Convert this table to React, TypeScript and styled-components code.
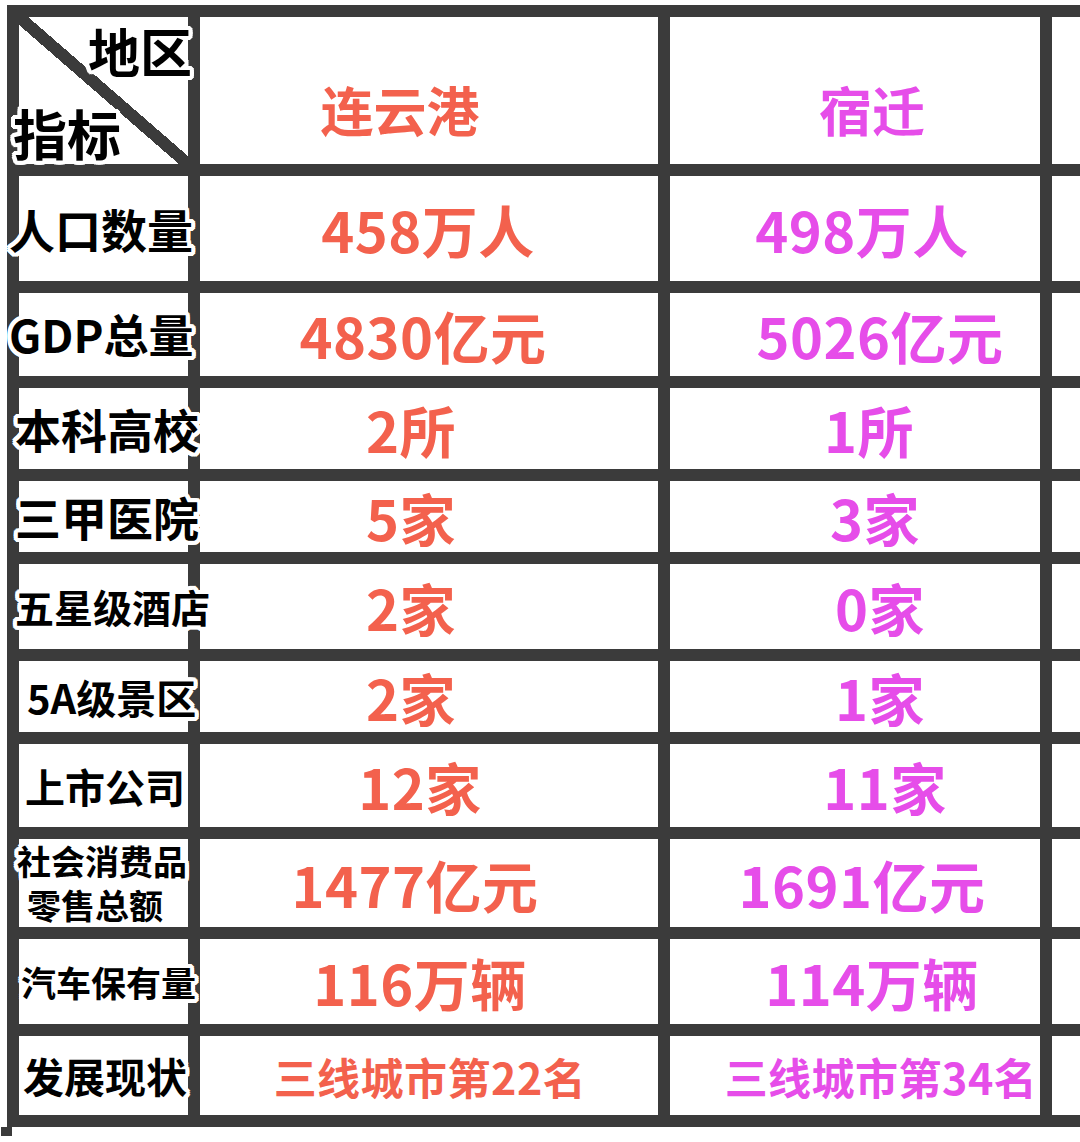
import React from "react";
import styled, { createGlobalStyle } from "styled-components";

const GlobalStyle = createGlobalStyle`
  html, body {
    margin: 0;
    padding: 0;
    background: #ffffff;
    overflow: hidden;
  }
  body {
    font-family: "Noto Sans CJK SC", "Noto Sans", sans-serif;
  }
`;

const LINE = "#3b3b3b";
const CORAL = "#f3614d";
const MAGENTA = "#e64de9";

// white halo round the black labels, like a sticker outline
const halo = [
  "4px 0 0 #fff",
  "-4px 0 0 #fff",
  "0 4px 0 #fff",
  "0 -4px 0 #fff",
  "3px 3px 0 #fff",
  "-3px 3px 0 #fff",
  "3px -3px 0 #fff",
  "-3px -3px 0 #fff",
  "2px 4px 0 #fff",
  "-2px 4px 0 #fff",
  "2px -4px 0 #fff",
  "-2px -4px 0 #fff",
  "4px 2px 0 #fff",
  "-4px 2px 0 #fff",
  "4px -2px 0 #fff",
  "-4px -2px 0 #fff",
].join(", ");

interface Row {
  label: string[];
  size: number;
  pad?: number;
  a: string;
  b: string;
  aSize?: number;
  bSize?: number;
  aShift?: number;
  bShift?: number;
}

const rows: Row[] = [
  { label: ["人口数量"], size: 46, pad: 0, a: "458万人", b: "498万人", aShift: -2, bShift: 14, aSize: 56, bSize: 56 },
  { label: ["GDP总量"], size: 45, pad: 0, a: "4830亿元", b: "5026亿元", aShift: -12, bShift: 50, aSize: 56, bSize: 56 },
  { label: ["本科高校"], size: 46, pad: 6, a: "2所", b: "1所", aShift: -36, bShift: 28, aSize: 56, bSize: 56 },
  { label: ["三甲医院"], size: 46, pad: 6, a: "5家", b: "3家", aShift: -36, bShift: 40, aSize: 56, bSize: 56 },
  { label: ["五星级酒店"], size: 39, pad: 6, a: "2家", b: "0家", aShift: -36, bShift: 50, aSize: 56, bSize: 56 },
  { label: ["5A级景区"], size: 40, pad: 18, a: "2家", b: "1家", aShift: -36, bShift: 50, aSize: 56, bSize: 56 },
  { label: ["上市公司"], size: 40, pad: 16, a: "12家", b: "11家", aShift: -18, bShift: 60, aSize: 56, bSize: 56 },
  { label: ["社会消费品", "零售总额"], size: 34, pad: 8, a: "1477亿元", b: "1691亿元", aShift: -28, bShift: 14, aSize: 56, bSize: 56 },
  { label: ["汽车保有量"], size: 35, pad: 12, a: "116万辆", b: "114万辆", aShift: -18, bShift: 34, aSize: 56, bSize: 56 },
  { label: ["发展现状"], size: 41, pad: 14, a: "三线城市第22名", b: "三线城市第34名", aSize: 43, bSize: 43, aShift: 2, bShift: 52 },
];

export default function App() {
  return (
    <>
      <GlobalStyle />
      <Page>
        <Table>
          <Corner>
            <CornerTop>地区</CornerTop>
            <CornerBottom>指标</CornerBottom>
          </Corner>
          <HeadCell $color={CORAL} $shift={-58}>
            连云港
          </HeadCell>
          <HeadCell $color={MAGENTA} $shift={34}>
            宿迁
          </HeadCell>
          <Cell />

          {rows.map((r) => (
            <React.Fragment key={r.label.join("")}>
              <LabelCell $size={r.size} $pad={r.pad ?? 0}>
                {r.label.map((t) => (
                  <span key={t}>{t}</span>
                ))}
              </LabelCell>
              <ValueCell $color={CORAL} $size={r.aSize ?? 54} $shift={r.aShift ?? 0}>
                {r.a}
              </ValueCell>
              <ValueCell $color={MAGENTA} $size={r.bSize ?? 54} $shift={r.bShift ?? 0}>
                {r.b}
              </ValueCell>
              <Cell />
            </React.Fragment>
          ))}
        </Table>
        <TailLine />
      </Page>
    </>
  );
}

const Page = styled.div`
  width: 1080px;
  height: 1142px;
  overflow: hidden;
  padding: 5px 0 0 7px;
  box-sizing: border-box;
`;

const Table = styled.div`
  display: grid;
  width: max-content;
  background: ${LINE};
  padding: 12px;
  gap: 12px;
  grid-template-columns: 169px 458px 370px 120px;
  grid-template-rows: 147px 105px 83px 81px 71px 85px 71px 83px 88px 85px 79px;
`;

// the left rule runs on a little past the bottom rule
const TailLine = styled.div`
  width: 11px;
  height: 9px;
  margin-left: -6px;
  background: ${LINE};
`;

const Cell = styled.div`
  background: #ffffff;
  position: relative;
  min-width: 0;
`;

const Corner = styled(Cell)`
  display: flex;
  flex-direction: column;
  justify-content: space-between;
  padding: 8px 0 0 0;
  background: linear-gradient(
    to top right,
    #ffffff calc(50% - 6px),
    ${LINE} calc(50% - 6px),
    ${LINE} calc(50% + 6px),
    #ffffff calc(50% + 6px)
  );
  font-weight: 700;
  color: #000;
  line-height: 1;
`;

const CornerTop = styled.span`
  align-self: flex-end;
  font-size: 52px;
  margin-right: -4px;
  text-shadow: ${halo};
`;

const CornerBottom = styled.span`
  align-self: flex-start;
  font-size: 54px;
  margin-left: -6px;
  margin-bottom: 4px;
  text-shadow: ${halo};
`;

const HeadCell = styled(Cell)<{ $color: string; $shift: number }>`
  display: flex;
  align-items: center;
  justify-content: center;
  padding-top: 36px;
  box-sizing: border-box;
  color: ${(p) => p.$color};
  font-size: 53px;
  font-weight: 700;
  text-indent: ${(p) => p.$shift}px;
`;

const LabelCell = styled(Cell)<{ $size: number; $pad: number }>`
  display: flex;
  flex-direction: column;
  justify-content: center;
  align-items: flex-start;
  padding-left: ${(p) => p.$pad}px;
  margin-left: -10px;
  font-size: ${(p) => p.$size}px;
  font-weight: 700;
  color: #000;
  line-height: 1.3;
  white-space: nowrap;
  z-index: 1;
  background: transparent;

  &::before {
    content: "";
    position: absolute;
    inset: 0 0 0 10px;
    background: #fff;
    z-index: -1;
  }

  span {
    text-shadow: ${halo};
  }
  span + span {
    margin-left: 10px;
  }
`;

const ValueCell = styled(Cell)<{ $color: string; $size: number; $shift: number }>`
  display: flex;
  align-items: center;
  justify-content: center;
  color: ${(p) => p.$color};
  font-size: ${(p) => p.$size}px;
  font-weight: 700;
  white-space: nowrap;
  letter-spacing: 0.5px;
  text-indent: ${(p) => p.$shift}px;
`;
